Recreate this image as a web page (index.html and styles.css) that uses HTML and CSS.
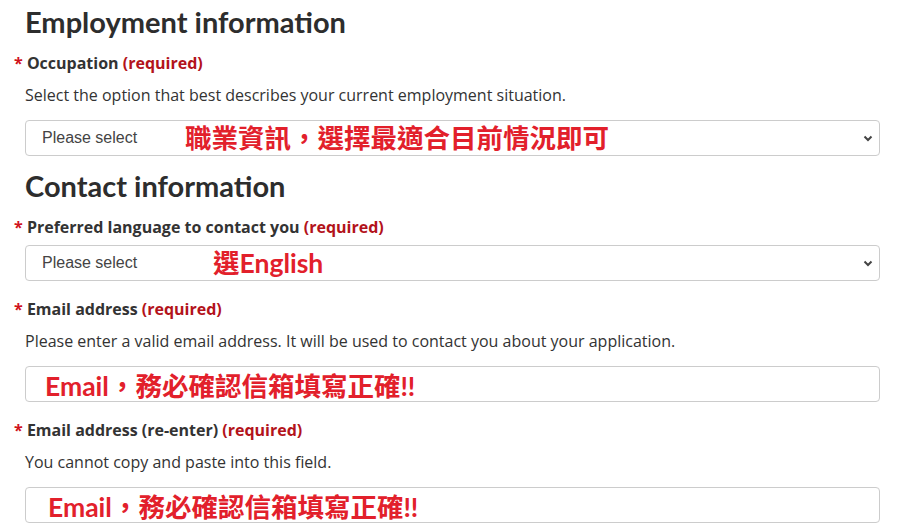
FILE: index.html
```html
<!DOCTYPE html>
<html lang="en">
<head>
<meta charset="utf-8">
<title>Application form</title>
<link rel="stylesheet" href="styles.css">
</head>
<body>
<main class="form">
  <h2 class="section-title">Employment information</h2>
  <div class="group group-first">
    <label class="label"><span class="star">*</span> Occupation <span class="req">(required)</span></label>
    <p class="help">Select the option that best describes your current employment situation.</p>
    <div class="field select">
      <span class="placeholder">Please select</span>
      <svg class="chev" width="10" height="7" viewBox="0 0 10 7"><path d="M1.5 1.5 L5 5 L8.5 1.5" fill="none" stroke="#444" stroke-width="2"/></svg>
      <span class="note note-occ" lang="zh-Hant">職業資訊，選擇最適合目前情況即可</span>
    </div>
  </div>

  <h2 class="section-title">Contact information</h2>
  <div class="group">
    <label class="label label-tight"><span class="star">*</span> Preferred language to contact you <span class="req">(required)</span></label>
    <div class="field select">
      <span class="placeholder">Please select</span>
      <svg class="chev" width="10" height="7" viewBox="0 0 10 7"><path d="M1.5 1.5 L5 5 L8.5 1.5" fill="none" stroke="#444" stroke-width="2"/></svg>
      <span class="note note-lang" lang="zh-Hant">選English</span>
    </div>
  </div>
  <div class="group">
    <label class="label"><span class="star">*</span> Email address <span class="req">(required)</span></label>
    <p class="help">Please enter a valid email address. It will be used to contact you about your application.</p>
    <div class="field input">
      <span class="note note-email" lang="zh-Hant">Email，務必確認信箱填寫正確!!</span>
    </div>
  </div>
  <div class="group">
    <label class="label"><span class="star">*</span> Email address (re-enter) <span class="req">(required)</span></label>
    <p class="help">You cannot copy and paste into this field.</p>
    <div class="field input">
      <span class="note note-email2" lang="zh-Hant">Email，務必確認信箱填寫正確!!</span>
    </div>
  </div>
</main>
</body>
</html>
```

FILE: styles.css
```css
html, body {
  margin: 0;
  padding: 0;
  background: #ffffff;
}

body {
  font-family: "Open Sans", "Noto Sans", sans-serif;
  color: #333333;
}

.form {
  width: 855px;
  padding: 5px 0 0 25px;
}

.section-title {
  font-family: Lato, "Open Sans", sans-serif;
  font-weight: 700;
  font-size: 29px;
  line-height: 34px;
  color: #2d2d2d;
  margin: 0 0 13px 0;
}

.group {
  margin-bottom: 17px;
}

.group-first {
  margin-bottom: 13px;
}

.label {
  display: block;
  margin-left: -11px;
  font-size: 16px;
  line-height: 22px;
  font-weight: 700;
  color: #333333;
  margin-bottom: 10px;
}

.label-tight {
  margin-bottom: 7px;
}

.star {
  color: #d0121b;
}

.req {
  color: #b3131b;
}

.help {
  margin: 0 0 14px 0;
  font-size: 16px;
  line-height: 22px;
  color: #333333;
}

.field {
  position: relative;
  box-sizing: border-box;
  width: 855px;
  height: 36px;
  border: 1px solid #cccccc;
  border-radius: 4px;
  background: #ffffff;
  display: flex;
  align-items: center;
}

.placeholder {
  font-family: "Liberation Sans", Arial, sans-serif;
  font-size: 16px;
  color: #444444;
  padding-left: 16px;
  flex: 1;
}

.chev {
  margin-right: 6px;
}

.note {
  position: absolute;
  top: 50%;
  transform: translateY(-50%);
  font-family: Lato, "Noto Sans CJK TC", sans-serif;
  font-weight: 700;
  font-size: 26.5px;
  line-height: 1;
  color: #e2202b;
  white-space: nowrap;
}

.note-occ { left: 159px; }
.note-lang { left: 187px; }
.note-email { left: 19px; top: 57%; }
.note-email2 { left: 22px; top: 57%; }
```
